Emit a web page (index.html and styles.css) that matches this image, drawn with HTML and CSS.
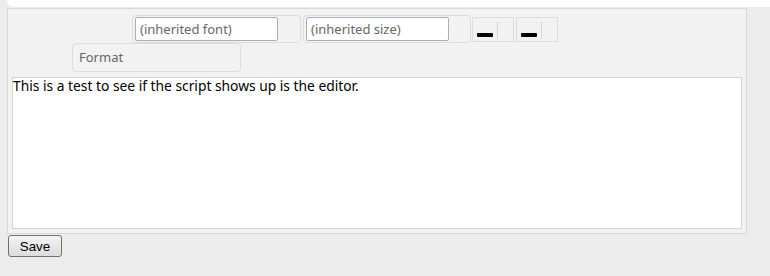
FILE: index.html
```html
<!DOCTYPE html>
<html lang="en">
<head>
  <meta charset="UTF-8" />
  <title>Editor</title>
  <link rel="stylesheet" href="styles.css">
</head>
<body>
  <div class="top-bar"></div>
  <div class="panel">
    <div class="toolbar">
      <div class="toolbar-row row-one">
        <div class="combo">
          <span class="combo-input">(inherited font)</span>
        </div>
        <div class="combo combo-size">
          <span class="combo-input">(inherited size)</span>
        </div>
        <div class="color-btn"><span class="swatch"></span><span class="sep"></span></div>
        <div class="color-btn"><span class="swatch"></span><span class="sep"></span></div>
      </div>
      <div class="toolbar-row row-two">
        <div class="format-box">Format</div>
      </div>
    </div>
    <div class="editor">This is a test to see if the script shows up is the editor.</div>
  </div>
  <button class="save-btn">Save</button>
</body>
</html>
```

FILE: styles.css
```css
* {
  box-sizing: border-box;
}
body {
  margin: 0;
  background: #ececec;
  font-family: "Noto Sans", sans-serif;
}
.top-bar {
  height: 7px;
  margin-left: 7px;
  background: #fff;
  border-bottom-left-radius: 7px;
}
.panel {
  width: 740px;
  height: 226px;
  margin: 1px 0 0 7px;
  padding: 5px 4px 4px 4px;
  background: #f2f2f2;
  border: 1px solid #d9d9d9;
}
.toolbar-row {
  display: flex;
  align-items: flex-start;
}
.row-one {
  padding-left: 120px;
  gap: 2px;
}
.row-two {
  padding-left: 60px;
}
.combo {
  margin-top: 1px;
  padding: 1px 22px 1px 2px;
  border: 1px solid #dcdcdc;
  border-radius: 4px;
}
.combo-size {
  padding-right: 21px;
  margin-right: -1px;
}
.combo-input {
  display: block;
  width: 143px;
  height: 24px;
  padding-left: 4px;
  line-height: 22px;
  font-size: 13px;
  color: #666;
  background: #fff;
  border: 1px solid #a8aebb;
  border-radius: 2px;
  white-space: nowrap;
}
.color-btn {
  position: relative;
  width: 42px;
  height: 25px;
  margin-top: 3px;
  border: 1px solid #dcdcdc;
}
.swatch {
  position: absolute;
  left: 4px;
  top: 15px;
  width: 16px;
  height: 4px;
  background: #000;
  border-radius: 1px;
}
.sep {
  position: absolute;
  left: 24px;
  top: 4px;
  width: 1px;
  height: 17px;
  background: #d4d4d4;
}
.format-box {
  width: 169px;
  height: 29px;
  padding-left: 6px;
  line-height: 27px;
  font-size: 13px;
  color: #666;
  border: 1px solid #dcdcdc;
  border-radius: 4px;
}
.editor {
  height: 152px;
  margin-top: 5px;
  padding: 0;
  font-size: 13.8px;
  line-height: 16px;
  color: #000;
  background: #fff;
  border: 1px solid #d3d3d3;
}
.save-btn {
  display: block;
  width: 54px;
  height: 22px;
  margin: 1px 0 0 8px;
  padding: 0;
  font-family: "Liberation Sans", Arial, sans-serif;
  font-size: 13.33px;
  color: #000;
  background: linear-gradient(to bottom, #f4f4f4, #dcdcdc);
  border: 1px solid #707070;
  border-radius: 3px;
}
```
